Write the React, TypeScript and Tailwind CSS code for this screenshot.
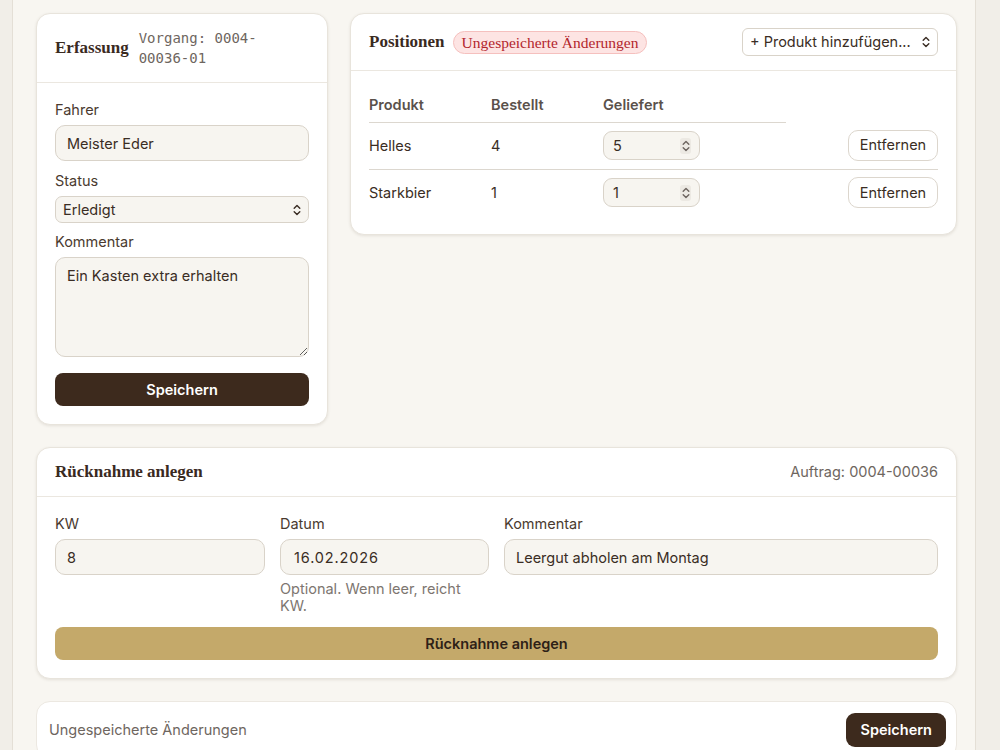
import React from "react";

const UpDown = ({ className = "" }: { className?: string }) => (
  <svg width="8" height="12" viewBox="0 0 8 12" className={className} fill="none" stroke="currentColor" strokeWidth="1.4" strokeLinecap="round" strokeLinejoin="round">
    <path d="M1.2 4.2 L4 1.4 L6.8 4.2" />
    <path d="M1.2 7.8 L4 10.6 L6.8 7.8" />
  </svg>
);

const serif = "font-['Liberation_Serif',serif]";

const inputCls =
  "w-full h-[36px] rounded-[10px] border border-[#d9d3c9] bg-[#f7f5f0] px-[11px] text-[14.5px] text-[#3a2d24] outline-none";

const Label = ({ children }: { children: React.ReactNode }) => (
  <div className="text-[14.5px] leading-[20px] text-[#4a3a2f] mb-[5px]">{children}</div>
);

const NumberBox = ({ value }: { value: string }) => (
  <div className="relative w-[97px] h-[29px] rounded-[9px] border border-[#d9d3c9] bg-[#f7f5f0] flex items-center pl-[9px] text-[14.5px] text-[#3a2d24]">
    {value}
    <div className="absolute right-[8px] top-[6px] h-[16px] w-[11px] rounded-[3px] bg-[#ece9e3] flex items-center justify-center text-[#6d6560]">
      <UpDown />
    </div>
  </div>
);

const RemoveBtn = () => (
  <button className="h-[31px] w-[90px] rounded-[10px] border border-[#dcd6cd] bg-white text-[14.5px] text-[#3a2d24]">
    Entfernen
  </button>
);

export default function App() {
  const rows = [
    { name: "Helles", ordered: "4", delivered: "5" },
    { name: "Starkbier", ordered: "1", delivered: "1" },
  ];

  return (
    <div className="min-h-screen bg-[#f1eee8] flex font-['Inter',sans-serif] text-[#3a2d24]">
      <div className="w-[12px] shrink-0" />
      <main className="w-[964px] shrink-0 border-x border-[#e4dfd6] bg-[#f8f6f1] pl-[23px] pr-[18px] pt-[13px] pb-8">
        {/* top row */}
        <div className="flex items-start gap-[22px]">
          {/* Erfassung */}
          <section className="w-[292px] shrink-0 rounded-[14px] border border-[#e8e4dc] bg-white shadow-[0_1px_3px_rgba(60,40,20,0.1)]">
            <div className="flex items-center gap-[10px] px-[18px] py-[14px] border-b border-[#ebe7e0]">
              <h2 className={`${serif} font-bold text-[17px] text-[#3a2a1f]`}>Erfassung</h2>
              <div className="max-w-[150px] font-['DejaVu_Sans_Mono',monospace] text-[14px] leading-[20px] text-[#6e6660]">
                Vorgang: 0004-00036-01
              </div>
            </div>
            <div className="px-[18px] pt-[17px] pb-[18px]">
              <Label>Fahrer</Label>
              <input className={inputCls} defaultValue="Meister Eder" />
              <div className="mt-[10px]">
                <Label>Status</Label>
                <div className="relative">
                  <select className="w-full h-[27px] appearance-none rounded-[7px] border border-[#d9d3c9] bg-[#f7f5f0] pl-[7px] text-[14.5px] text-[#3a2d24] outline-none">
                    <option>Erledigt</option>
                  </select>
                  <UpDown className="absolute right-[8px] top-[8px] text-[#3a2d24] pointer-events-none" />
                </div>
              </div>
              <div className="mt-[9px]">
                <Label>Kommentar</Label>
                <textarea
                  className="block w-full h-[100px] rounded-[10px] border border-[#d9d3c9] bg-[#f7f5f0] px-[11px] py-[7px] text-[14.5px] text-[#3a2d24] outline-none"
                  defaultValue="Ein Kasten extra erhalten"
                />
              </div>
              <button className="mt-[16px] w-full h-[33px] rounded-[8px] bg-[#3d2a1d] text-white text-[14.5px] font-semibold">
                Speichern
              </button>
            </div>
          </section>

          {/* Positionen */}
          <section className="flex-1 rounded-[14px] border border-[#e8e4dc] bg-white shadow-[0_1px_3px_rgba(60,40,20,0.1)]">
            <div className="flex items-center justify-between px-[18px] py-[14px] border-b border-[#ebe7e0]">
              <div className="flex items-center gap-[8px]">
                <h2 className={`${serif} font-bold text-[17px] text-[#3a2a1f]`}>Positionen</h2>
                <span className={`${serif} text-[15.5px] leading-[21px] text-[#b3262d] bg-[#fde4e3] border border-[#f5c0be] rounded-full px-[8px]`}>
                  Ungespeicherte Änderungen
                </span>
              </div>
              <div className="relative w-[196px]">
                <select className="w-full h-[28px] appearance-none rounded-[6px] border border-[#d9d3c9] bg-white pl-[7px] text-[14.5px] text-[#3a2d24] outline-none">
                  <option>+ Produkt hinzufügen...</option>
                </select>
                <UpDown className="absolute right-[8px] top-[8px] text-[#3a2d24] pointer-events-none" />
              </div>
            </div>
            <div className="px-[18px] pt-[18px] pb-[18px]">
              <table className="w-full border-collapse text-[14.5px]">
                <thead>
                  <tr>
                    <th className="w-[122px] h-[33px] text-left font-semibold text-[#5a514b] border-b border-[#dcd7cf]">Produkt</th>
                    <th className="w-[112px] text-left font-semibold text-[#5a514b] border-b border-[#dcd7cf]">Bestellt</th>
                    <th className="w-[183px] text-left font-semibold text-[#5a514b] border-b border-[#dcd7cf]">Geliefert</th>
                    <th />
                  </tr>
                </thead>
                <tbody>
                  {rows.map((r, i) => (
                    <tr key={r.name} className={i === 0 ? "border-b border-[#dcd7cf]" : ""}>
                      <td className="h-[47px] text-[#3a2d24]">{r.name}</td>
                      <td className="text-[#3a2d24]">{r.ordered}</td>
                      <td>
                        <NumberBox value={r.delivered} />
                      </td>
                      <td className="text-right">
                        <RemoveBtn />
                      </td>
                    </tr>
                  ))}
                </tbody>
              </table>
            </div>
          </section>
        </div>

        {/* Rücknahme */}
        <section className="mt-[22px] rounded-[14px] border border-[#e8e4dc] bg-white shadow-[0_1px_3px_rgba(60,40,20,0.1)]">
          <div className="flex items-center justify-between px-[18px] py-[14px] border-b border-[#ebe7e0]">
            <h2 className={`${serif} font-bold text-[17px] leading-[20px] text-[#3a2a1f]`}>Rücknahme anlegen</h2>
            <span className="text-[14.5px] leading-[20px] text-[#6e6660]">Auftrag: 0004-00036</span>
          </div>
          <div className="px-[18px] pt-[17px] pb-[18px]">
            <div className="grid grid-cols-[210px_209px_1fr] gap-x-[15px]">
              <div>
                <Label>KW</Label>
                <input className={inputCls} defaultValue="8" />
              </div>
              <div>
                <Label>Datum</Label>
                <input className={`${inputCls} tracking-[0.06em] pl-[13px]`} defaultValue="16.02.2026" />
                <p className="mt-[5px] pr-[12px] text-[14.5px] leading-[17px] text-[#7d7670]">Optional. Wenn leer, reicht KW.</p>
              </div>
              <div>
                <Label>Kommentar</Label>
                <input className={inputCls} defaultValue="Leergut abholen am Montag" />
              </div>
            </div>
            <button className="mt-[13px] w-full h-[33px] rounded-[8px] bg-[#c4a96a] text-[#2e2117] text-[14.5px] font-semibold">
              Rücknahme anlegen
            </button>
          </div>
        </section>

        {/* Save bar */}
        <section className="mt-[22px] flex items-center justify-between rounded-[14px] border border-[#ece8e1] bg-white pl-[12px] pr-[10px] py-[11px]">
          <span className="text-[14.5px] text-[#6e6660]">Ungespeicherte Änderungen</span>
          <button className="h-[34px] px-[14px] rounded-[9px] bg-[#3d2a1d] text-white text-[14.5px] font-semibold">
            Speichern
          </button>
        </section>
      </main>
      <div className="flex-1" />
    </div>
  );
}
